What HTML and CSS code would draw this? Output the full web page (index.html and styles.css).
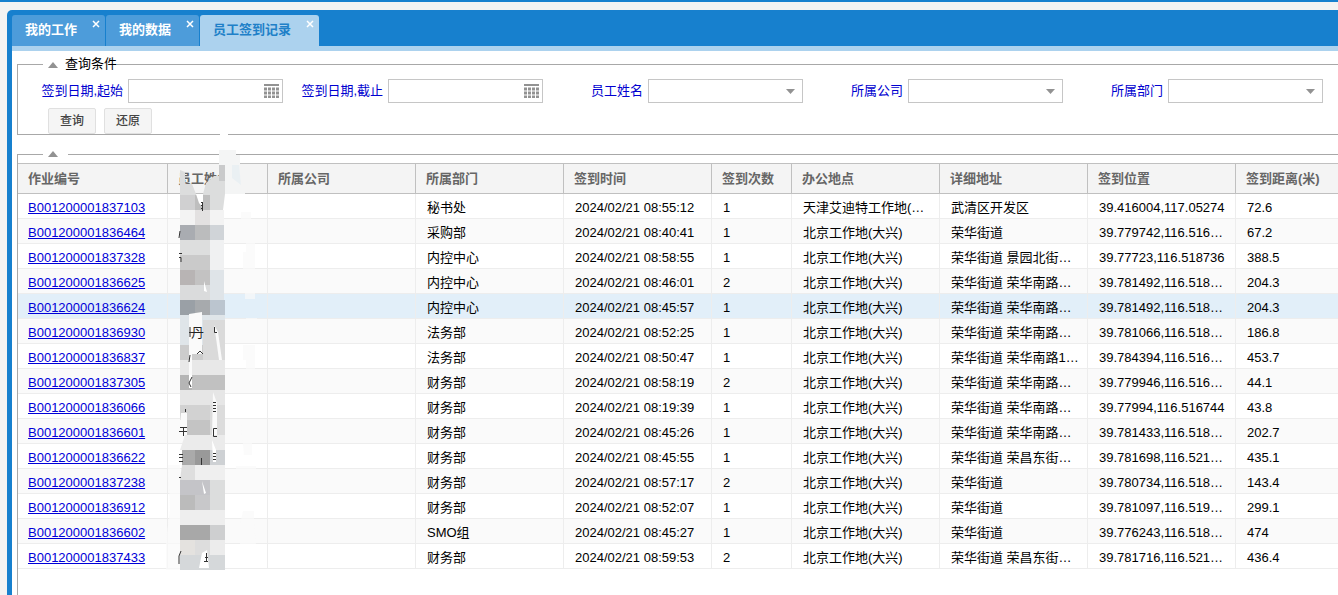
FILE: index.html
```
<!DOCTYPE html>
<html lang="zh-CN">
<head>
<meta charset="utf-8">
<title>员工签到记录</title>
<link rel="stylesheet" href="styles.css">
</head>
<body>
<div class="frame">
  <nav class="tabs">
    <div class="tab"><a href="#" class="tab-link">我的工作</a><button class="tab-close" aria-label="关闭我的工作"><svg width="8" height="8" viewBox="0 0 8 8"><path d="M1 1L7 7M7 1L1 7"/></svg></button></div>
    <div class="tab"><a href="#" class="tab-link">我的数据</a><button class="tab-close" aria-label="关闭我的数据"><svg width="8" height="8" viewBox="0 0 8 8"><path d="M1 1L7 7M7 1L1 7"/></svg></button></div>
    <div class="tab tab-active"><a href="#" class="tab-link">员工签到记录</a><button class="tab-close" aria-label="关闭员工签到记录"><svg width="8" height="8" viewBox="0 0 8 8"><path d="M1 1L7 7M7 1L1 7"/></svg></button></div>
  </nav>
  <main class="content">
    <fieldset class="panel query">
      <legend class="legend"><svg class="tri" width="10" height="6"><path d="M0 6L5 0L10 6Z"/></svg><span>查询条件</span></legend>
      <div class="fields">
        <div class="field"><label class="label" for="from">签到日期,起始</label><div class="box"><input class="control" id="from" type="text"><button class="cal" aria-label="选择起始日期"><svg width="15" height="14"><path d="M0 1H15"/><path class="dots" d="M0 5H15M0 9H15M0 13H15"/></svg></button></div></div>
        <div class="field"><label class="label" for="to">签到日期,截止</label><div class="box"><input class="control" id="to" type="text"><button class="cal" aria-label="选择截止日期"><svg width="15" height="14"><path d="M0 1H15"/><path class="dots" d="M0 5H15M0 9H15M0 13H15"/></svg></button></div></div>
        <div class="field"><label class="label" for="name">员工姓名</label><div class="box"><select class="control" id="name"><option></option></select><svg class="arrow" width="9" height="5"><path d="M0 0H9L4.500 5Z"/></svg></div></div>
        <div class="field"><label class="label" for="company">所属公司</label><div class="box"><select class="control" id="company"><option></option></select><svg class="arrow" width="9" height="5"><path d="M0 0H9L4.500 5Z"/></svg></div></div>
        <div class="field"><label class="label" for="dept">所属部门</label><div class="box"><select class="control" id="dept"><option></option></select><svg class="arrow" width="9" height="5"><path d="M0 0H9L4.500 5Z"/></svg></div></div>
      </div>
      <div class="actions"><button class="btn">查询</button><button class="btn">还原</button></div>
    </fieldset>
    <fieldset class="panel results">
      <legend class="legend legend-short"><svg class="tri" width="10" height="6"><path d="M0 6L5 0L10 6Z"/></svg></legend>
      <table class="grid">
        <colgroup><col class="w-id"><col class="w-name"><col class="w-std"><col class="w-std"><col class="w-std"><col class="w-num"><col class="w-std"><col class="w-std"><col class="w-std"><col></colgroup>
        <thead><tr><th>作业编号</th><th>员工姓名</th><th>所属公司</th><th>所属部门</th><th>签到时间</th><th>签到次数</th><th>办公地点</th><th>详细地址</th><th>签到位置</th><th>签到距离(米)</th></tr></thead>
        <tbody>
        <tr><td><a href="#">B001200001837103</a></td><td></td><td></td><td>秘书处</td><td>2024/02/21 08:55:12</td><td>1</td><td>天津艾迪特工作地(…</td><td>武清区开发区</td><td>39.416004,117.05274</td><td>72.6</td></tr>
        <tr><td><a href="#">B001200001836464</a></td><td></td><td></td><td>采购部</td><td>2024/02/21 08:40:41</td><td>1</td><td>北京工作地(大兴)</td><td>荣华街道</td><td>39.779742,116.516…</td><td>67.2</td></tr>
        <tr><td><a href="#">B001200001837328</a></td><td></td><td></td><td>内控中心</td><td>2024/02/21 08:58:55</td><td>1</td><td>北京工作地(大兴)</td><td>荣华街道 景园北街…</td><td>39.77723,116.518736</td><td>388.5</td></tr>
        <tr><td><a href="#">B001200001836625</a></td><td></td><td></td><td>内控中心</td><td>2024/02/21 08:46:01</td><td>2</td><td>北京工作地(大兴)</td><td>荣华街道 荣华南路…</td><td>39.781492,116.518…</td><td>204.3</td></tr>
        <tr class="hover"><td><a href="#">B001200001836624</a></td><td></td><td></td><td>内控中心</td><td>2024/02/21 08:45:57</td><td>1</td><td>北京工作地(大兴)</td><td>荣华街道 荣华南路…</td><td>39.781492,116.518…</td><td>204.3</td></tr>
        <tr><td><a href="#">B001200001836930</a></td><td></td><td></td><td>法务部</td><td>2024/02/21 08:52:25</td><td>1</td><td>北京工作地(大兴)</td><td>荣华街道 荣华南路…</td><td>39.781066,116.518…</td><td>186.8</td></tr>
        <tr><td><a href="#">B001200001836837</a></td><td></td><td></td><td>法务部</td><td>2024/02/21 08:50:47</td><td>1</td><td>北京工作地(大兴)</td><td>荣华街道 荣华南路1…</td><td>39.784394,116.516…</td><td>453.7</td></tr>
        <tr><td><a href="#">B001200001837305</a></td><td></td><td></td><td>财务部</td><td>2024/02/21 08:58:19</td><td>2</td><td>北京工作地(大兴)</td><td>荣华街道 荣华南路…</td><td>39.779946,116.516…</td><td>44.1</td></tr>
        <tr><td><a href="#">B001200001836066</a></td><td></td><td></td><td>财务部</td><td>2024/02/21 08:19:39</td><td>1</td><td>北京工作地(大兴)</td><td>荣华街道 荣华南路…</td><td>39.77994,116.516744</td><td>43.8</td></tr>
        <tr><td><a href="#">B001200001836601</a></td><td></td><td></td><td>财务部</td><td>2024/02/21 08:45:26</td><td>1</td><td>北京工作地(大兴)</td><td>荣华街道 荣华南路…</td><td>39.781433,116.518…</td><td>202.7</td></tr>
        <tr><td><a href="#">B001200001836622</a></td><td></td><td></td><td>财务部</td><td>2024/02/21 08:45:55</td><td>1</td><td>北京工作地(大兴)</td><td>荣华街道 荣昌东街…</td><td>39.781698,116.521…</td><td>435.1</td></tr>
        <tr><td><a href="#">B001200001837238</a></td><td></td><td></td><td>财务部</td><td>2024/02/21 08:57:17</td><td>2</td><td>北京工作地(大兴)</td><td>荣华街道</td><td>39.780734,116.518…</td><td>143.4</td></tr>
        <tr><td><a href="#">B001200001836912</a></td><td></td><td></td><td>财务部</td><td>2024/02/21 08:52:07</td><td>1</td><td>北京工作地(大兴)</td><td>荣华街道</td><td>39.781097,116.519…</td><td>299.1</td></tr>
        <tr><td><a href="#">B001200001836602</a></td><td></td><td></td><td>SMO组</td><td>2024/02/21 08:45:27</td><td>1</td><td>北京工作地(大兴)</td><td>荣华街道</td><td>39.776243,116.518…</td><td>474</td></tr>
        <tr><td><a href="#">B001200001837433</a></td><td></td><td></td><td>财务部</td><td>2024/02/21 08:59:53</td><td>2</td><td>北京工作地(大兴)</td><td>荣华街道 荣昌东街…</td><td>39.781716,116.521…</td><td>436.4</td></tr>
        </tbody>
      </table>
      <!-- Mosaic that hides the employee names -->
      <svg class="mosaic" width="110" height="440" viewBox="160 130 110 440" aria-hidden="true">
        <path fill="#fff" d="M220 133H228V136H220Z"/>
        <g fill="#fafafa" fill-opacity="0.700"><path d="M168 465H180V570H166V540L170 510ZM241 212H251V225H241ZM246 242H255V272H243V252H246ZM245 286H255V299H245ZM246 318H257V332H246ZM243 345H255V376H246V360H243ZM241 425H252V455H244ZM236 466H256V476H236ZM243 511H254V524L256 544H240V524Z"/></g>
        <path fill="#f4f5f5" d="M219 150H236V155H240V190H245V194H225V180L219 165Z"/>
        <path fill="#eaf0f3" d="M232 165H239L241 185L232 178Z"/>
        <path fill="#dcdddd" d="M180 170L185 172V184H192L196 194H203L206 183L214 176H219V165H225V194L223 210H180Z"/>
        <path fill="#c9cacb" d="M219 165H225V181H219Z"/>
        <path fill="#d0d0d1" d="M180 195H195V210H180Z"/><path fill="#bebebe" d="M195 195H210V210H195Z"/>
        <path fill="#f3f3f3" d="M180 210H224V225H180Z"/><path fill="#e3e1e1" d="M195 210H210V225H195Z"/>
        <path fill="#a9acb1" d="M180 225H195V240H180Z"/><path fill="#bbbcbd" d="M195 225H210V240H195Z"/><path fill="#d0d4d8" d="M210 225H224V240H210Z"/>
        <path fill="#dddede" d="M180 240H210V255H180Z"/><path fill="#f0f1f2" d="M210 240H224V270H210Z"/><path fill="#cacaca" d="M180 255H210V270H180Z"/>
        <path fill="#b8b4b4" d="M180 270H195V285H180Z"/><path fill="#c3c2c2" d="M195 270H210V285H195Z"/><path fill="#dfe4e8" d="M210 270H224V300H210Z"/>
        <path fill="#dadbdc" d="M180 285H210V300H180Z"/>
        <path fill="#9aa0a6" d="M180 300H195V315H180Z"/><path fill="#a7aaad" d="M195 300H210V315H195Z"/><path fill="#bbc5cf" d="M210 300H225V315H210Z"/>
        <path fill="#dfe5e9" d="M180 315H225V345H180Z"/><path fill="#d6d7d8" d="M203 320H225V360H203Z"/><path fill="#ccc" d="M180 345H225V360H180Z"/><path fill="#dadada" d="M203 320H225V360H203Z"/>
        <path fill="#e8e8e8" d="M180 360H225V375H180Z"/>
        <path fill="#fafafa" d="M189 314L202 312V354H192V375H189V355V325ZM214 325L218 332L222 360H219L216 338Z"/>
        <path fill="#b5b5b5" d="M180 375H192V390H180Z"/><path fill="#c1c1c1" d="M192 375H225V390H192Z"/><path fill="#fff" d="M189 375H192V388H189Z"/>
        <path fill="#e6e6e6" d="M180 390H225V405H180Z"/><path fill="#d2d2d2" d="M180 405H225V420H180Z"/><path fill="#c4c4c4" d="M187 420H210V435H187Z"/><path fill="#dcdcdc" d="M210 405H225V435H210Z"/><path fill="#fafafa" d="M181 413H187V437H179ZM213 392L217 403V435H212Z"/>
        <path fill="#ebebeb" d="M185 435H225V450H180Z"/>
        <path fill="#aaa" d="M182 450H195V465H182Z"/><path fill="#999" d="M195 450H210V465H195Z"/><path fill="#ced1d4" d="M210 450H225V465H210Z"/>
        <path fill="#dedede" d="M182 465H225V480H180Z"/><path fill="#efefef" d="M195 465H225V480H195Z"/><path fill="#fff" d="M212 440L216 450V462H213Z"/>
        <path fill="#c4c4c8" d="M180 480H210V495H180Z"/><path fill="#bbb" d="M180 495H195V510H180Z"/><path fill="#c8c8ca" d="M195 495H210V510H195Z"/><path fill="#dcdddd" d="M210 480H225V510H210Z"/>
        <path fill="#eee" d="M180 510H225V525H180Z"/><path fill="#a8a8a8" d="M180 525H210V540H180Z"/><path fill="#cecfd0" d="M210 525H225V540H210Z"/>
        <path fill="#e4e2df" d="M180 540H195V555H180Z"/><path fill="#ddd" d="M195 540H210V555H195Z"/><path fill="#ececec" d="M210 540H225V555H210Z"/><path fill="#d5d8da" d="M180 555H225V570H180Z"/><path fill="#fff" d="M202 553L207 550L209 568H199Z"/>
        <path fill="#fff" d="M196 194H203V208L199 203ZM204 281L207 292L204 291ZM202 481L206 493L204 494Z"/>
        <path class="ink" d="M202.500 202V211M201 202.500H203M201 205.500H203M201 208.500H203M180 231L179 238M179 253.500H182M179 257.500H181V262M189 332.500H192M190 327V337M214.500 327V332.500H217M190 355L189 362M197 354L200 351L203 354M192 377L189 383L191 387M185.500 409V412M213 402.500H216M213 405.500H216M213 408.500H216M213 411.500H216M180 427.500H187M179 431.500H187M183.500 427V436M217 428.500H213.500V436.500H217M179 454.500H183M179 457.500H183M179 461.500H183M201.500 458V465M213 453.500H216M213 456.500H216M213 459.500H216M179 477.500H181M181 551L179 556V564M206.500 553V561M205 557.500H208M204 561.500H208"/>
        <text class="name-part" x="191" y="337">丹</text>
      </svg>
    </fieldset>
  </main>
</div>
</body>
</html>
```
FILE: styles.css
```
* { box-sizing: border-box; }
body {
  margin: 0;
  min-height: 100vh;
  padding: 8px 0 0 7px;
  border-top: 2px solid #1780ce;
  background: #f3f3f3;
  color: #000;
  font: 13px/20px "Liberation Sans", "Noto Sans CJK SC", sans-serif;
  overflow: hidden;
  display: flex;
}
button, input, select { font: inherit; margin: 0; padding: 0; border: 0; border-radius: 0; }
svg { display: block; }
.frame {
  flex: 1;
  min-width: 0;
  padding: 5px 0 0 5px;
  background: #1780ce;
  border-radius: 5px 0 0 0;
}
.tabs { display: flex; gap: 1px; border-bottom: 5px solid #acd2ee; }
.tab {
  display: flex;
  align-items: flex-start;
  height: 31px;
  padding: 0 5px 0 13px;
  gap: 15px;
  border-radius: 3px 3px 0 0;
  background: #4d9cda;
}
.tab-link { color: #fff; font-weight: bold; line-height: 30px; text-decoration: none; }
.tab-close { background: none; padding-top: 5px; line-height: 0; }
.tab-close path { stroke: #fff; stroke-width: 1.500; fill: none; }
.tab-active { background: #acd2ee; }
.tab-active .tab-link { color: #2080c8; }
.content {
  min-height: calc(100vh - 51px);
  padding: 3px 0 0 5px;
  background: #fff;
}
.panel { position: relative; margin: 0; padding: 0; border: 1px solid #a8a8a8; border-right: 0; min-width: 0; }
.legend { display: flex; align-items: center; gap: 7px; margin-left: 25px; padding: 0 0 0 5px; }
.legend-short { padding-right: 10px; height: 8px; }
.tri, .arrow { fill: #929292; }
.query .tri { margin-top: 2px; }
.fields { display: flex; gap: 5px; margin-left: 10px; padding-top: 5px; }
.field { display: flex; align-items: center; gap: 5px; flex: none; }
.label { width: 95px; text-align: right; color: #0000d0; white-space: nowrap; }
.box {
  display: flex;
  align-items: center;
  width: 155px;
  height: 24px;
  padding-right: 3px;
  border: 1px solid #c6c6c6;
  background: #fff;
}
.control { flex: 1; min-width: 0; height: 20px; background: none; outline: 0; appearance: none; }
.box .arrow { margin-right: 4px; }
.cal { background: none; line-height: 0; }
.cal path { stroke: #929292; stroke-width: 2; }
.cal .dots { stroke-width: 3; stroke-dasharray: 3 1; }
.actions { display: flex; gap: 8px; padding: 5px 0 0 30px; }
.btn {
  width: 48px;
  height: 26px;
  border: 1px solid #e0e0e0;
  border-radius: 2px;
  background: #f5f5f5;
  color: #444;
  font-size: 12px;
  font-weight: 500;
}
.results { margin-top: 15px; min-height: 460px; }
.grid { width: 100%; table-layout: fixed; border-spacing: 0; margin-top: 5px; }
.w-id { width: 150px; }
.w-name { width: 100px; }
.w-std { width: 148px; }
.w-num { width: 80px; }
.grid th {
  height: 31px;
  padding: 0 0 0 10px;
  border: solid #c0c0c0;
  border-width: 1px 1px 1px 0;
  background: #f4f4f4;
  color: #666;
  text-align: left;
  font-weight: 600;
  white-space: nowrap;
}
.grid td {
  height: 25px;
  padding: 3px 0 0 11px;
  border: solid #ededed;
  border-width: 0 1px 1px 0;
  line-height: 20px;
  white-space: nowrap;
  overflow: hidden;
}
.grid td:first-child { padding-left: 10px; }
.grid tr > :last-child { border-right: 0; }
.grid tbody tr:nth-child(even) { background: #fafafa; }
.grid tbody tr.hover { background: #e2eff9; }
.grid a { color: #0000d8; }
.mosaic { position: absolute; left: 142px; top: -28px; pointer-events: none; }
.ink { stroke: #333; fill: none; }
.name-part { font-size: 13px; fill: #222; }
```
